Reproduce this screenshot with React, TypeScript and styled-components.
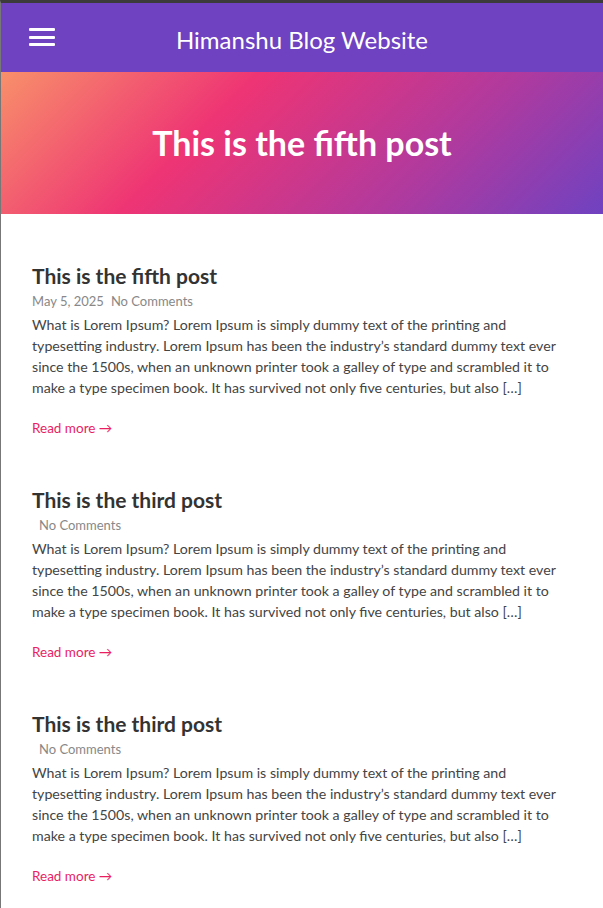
import React from "react";
import styled, { createGlobalStyle } from "styled-components";

const GlobalStyle = createGlobalStyle`
  * { box-sizing: border-box; }
  html, body { margin: 0; padding: 0; background: #ffffff; }
  body { font-family: Lato, "Open Sans", sans-serif; }
`;

const Frame = styled.div`
  border-top: 3px solid #3b3b3b;
  border-left: 1px solid #777777;
  min-height: 908px;
  background: #ffffff;
`;

const Header = styled.header`
  height: 69px;
  background: #6f42c1;
  display: grid;
  grid-template-columns: 80px 1fr 80px;
  align-items: center;
  padding: 0 0 0 28px;
`;

const MenuButton = styled.button`
  width: 26px;
  height: 18px;
  padding: 0;
  border: 0;
  background: transparent;
  display: flex;
  flex-direction: column;
  justify-content: space-between;
  cursor: pointer;
  margin-top: -1px;
`;

const Bar = styled.span`
  display: block;
  height: 3px;
  border-radius: 1px;
  background: #ffffff;
`;

const SiteTitle = styled.h1`
  margin: 5px 0 0 -28px;
  text-align: center;
  color: #ffffff;
  font-size: 24px;
  font-weight: 400;
  line-height: 1;
`;

const Hero = styled.section`
  height: 142px;
  background: linear-gradient(135deg, #f8906a 0%, #ee3474 35%, #b03a9e 70%, #6f42c1 100%);
  display: flex;
  align-items: center;
  justify-content: center;
`;

const HeroTitle = styled.h2`
  margin: 0;
  color: #ffffff;
  font-size: 34px;
  font-weight: 700;
  line-height: 1.2;
`;

const Main = styled.main`
  padding: 49px 32px 0 31px;
`;

const Post = styled.article`
  margin-bottom: 48px;
`;

const PostTitle = styled.h3`
  margin: 0 0 3px;
  color: #333333;
  font-size: 21px;
  font-weight: 700;
  line-height: 25px;
`;

const Meta = styled.div`
  color: #888888;
  font-size: 13px;
  line-height: 20px;
  margin-bottom: 3px;
`;

const DateText = styled.span`
  margin-right: 7px;
`;

const Excerpt = styled.p`
  margin: 0 0 19px;
  color: #444444;
  font-size: 14.2px;
  line-height: 21px;
`;

const ReadMore = styled.a`
  color: #e91e63;
  font-size: 13.5px;
  line-height: 21px;
  text-decoration: none;
`;

const excerpt =
  "What is Lorem Ipsum? Lorem Ipsum is simply dummy text of the printing and typesetting industry. Lorem Ipsum has been the industry\u2019s standard dummy text ever since the 1500s, when an unknown printer took a galley of type and scrambled it to make a type specimen book. It has survived not only five centuries, but also [\u2026]";

const posts = [
  { title: "This is the fifth post", date: "May 5, 2025" },
  { title: "This is the third post", date: "" },
  { title: "This is the third post", date: "" },
];

export default function App() {
  return (
    <>
      <GlobalStyle />
      <Frame>
        <Header>
          <MenuButton aria-label="Menu">
            <Bar />
            <Bar />
            <Bar />
          </MenuButton>
          <SiteTitle>Himanshu Blog Website</SiteTitle>
          <span />
        </Header>
        <Hero>
          <HeroTitle>This is the fifth post</HeroTitle>
        </Hero>
        <Main>
          {posts.map((p, i) => (
            <Post key={i}>
              <PostTitle>{p.title}</PostTitle>
              <Meta>
                <DateText>{p.date}</DateText>No Comments
              </Meta>
              <Excerpt>{excerpt}</Excerpt>
              <ReadMore href="#">Read more →</ReadMore>
            </Post>
          ))}
        </Main>
      </Frame>
    </>
  );
}
